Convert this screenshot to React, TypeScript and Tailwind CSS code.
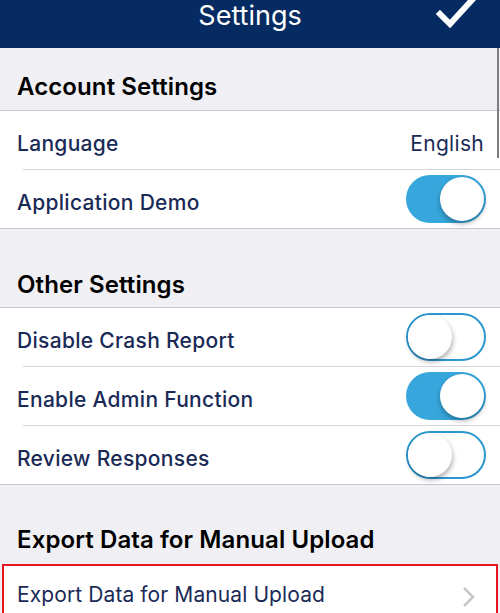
import React from "react"

const NAVY = "text-[#1a2a56]"

function Toggle({ on }: { on: boolean }) {
  return (
    <div
      className={
        on
          ? "relative w-[80px] h-[48px] rounded-full bg-[#36a6dc]"
          : "relative w-[80px] h-[48px] rounded-full bg-white border-2 border-[#2d97d0]"
      }
    >
      <div
        className={
          on
            ? "absolute top-[2px] right-[2px] w-[44px] h-[44px] rounded-full bg-white shadow-[0_3px_5px_rgba(0,0,0,0.3)]"
            : "absolute top-0 left-0 w-[44px] h-[44px] rounded-full bg-white shadow-[1px_3px_5px_rgba(0,0,0,0.3)]"
        }
      />
    </div>
  )
}

function SectionHeader({ title, top }: { title: string; top: string }) {
  return (
    <div className={`${top} px-[17px] border-b border-[#c8c7cc]`}>
      <h2 className="text-[24px] leading-[28px] font-semibold text-black tracking-[0.1px]">{title}</h2>
    </div>
  )
}

function Row({
  label,
  last,
  children,
}: {
  label: string
  last?: boolean
  children?: React.ReactNode
}) {
  return (
    <div className={last ? "bg-white border-b border-[#c8c7cc]" : "bg-white"}>
      <div className="flex items-center justify-between h-[58px] pl-[17px] pr-[14px]">
        <span className={`mt-[7px] text-[21px] font-medium tracking-[0.3px] ${NAVY}`}>{label}</span>
        {children}
      </div>
      {!last && <div className="ml-[23px] h-px bg-[#d6d5da]" />}
    </div>
  )
}

export default function App() {
  return (
    <div
      className="relative w-[500px] h-[613px] overflow-hidden bg-[#efeff4]"
      style={{ fontFamily: "Inter, 'Open Sans', sans-serif" }}
    >
      {/* Nav bar */}
      <header className="relative h-[48px] bg-[#052b62] flex justify-center">
        <h1 className="text-white text-[27px] leading-none font-normal mt-[2px]">Settings</h1>
        <svg
          className="absolute left-[436px] top-[-4px]"
          width="40"
          height="34"
          viewBox="0 0 40 34"
        >
          <polyline
            points="4,18 14,28 36,4"
            fill="none"
            stroke="white"
            strokeWidth="6"
            strokeLinecap="square"
          />
        </svg>
      </header>

      {/* scroll indicator */}
      <div className="absolute left-[497px] top-[48px] w-[2px] h-[110px] bg-[#7d7d82]" />

      <SectionHeader title="Account Settings" top="pt-[25px] pb-[9px]" />
      <Row label="Language">
        <span className={`mt-[7px] text-[21px] tracking-[0.3px] ${NAVY} mr-[2px]`}>English</span>
      </Row>
      <Row label="Application Demo" last>
        <Toggle on />
      </Row>

      <SectionHeader title="Other Settings" top="pt-[42px] pb-[8px]" />
      <Row label="Disable Crash Report">
        <Toggle on={false} />
      </Row>
      <Row label="Enable Admin Function">
        <Toggle on />
      </Row>
      <Row label="Review Responses" last>
        <Toggle on={false} />
      </Row>

      <div className="px-[17px] pt-[41px] pb-[10px]">
        <h2 className="text-[24px] leading-[28px] font-semibold text-black tracking-[0.1px]">
          Export Data for Manual Upload
        </h2>
      </div>
      <div className="ml-[2px] w-[496px] h-[62px] border-2 border-[#e8141f] bg-white flex items-start justify-between pl-[13px] pr-[20px] pt-[16px]">
        <span className={`text-[21px] leading-[26px] tracking-[0.1px] ${NAVY}`}>
          Export Data for Manual Upload
        </span>
        <svg className="mt-[4px]" width="14" height="22" viewBox="0 0 14 22">
          <polyline
            points="2,2 11,11 2,20"
            fill="none"
            stroke="#c7c7cc"
            strokeWidth="2.5"
          />
        </svg>
      </div>
    </div>
  )
}
